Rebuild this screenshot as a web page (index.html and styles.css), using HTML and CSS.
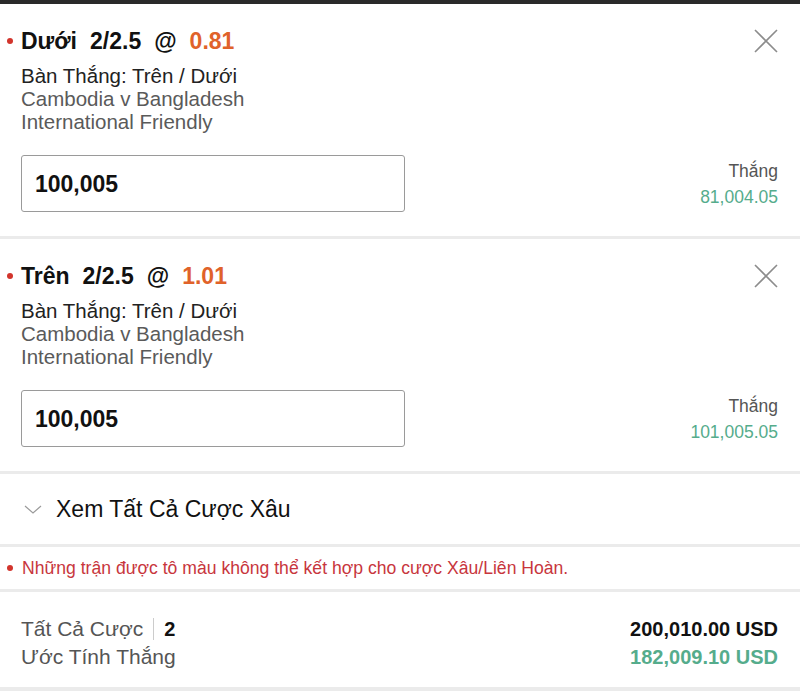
FILE: index.html
```html
<!DOCTYPE html>
<html lang="vi">
<head>
  <meta charset="UTF-8">
  <title>Phiếu Cược</title>
  <link rel="stylesheet" href="styles.css">
</head>
<body>
  <div class="slip">

    <div class="bet">
      <div class="bet-head">
        <div class="bet-title">
          <span class="pick">Dưới</span>
          <span class="line">2/2.5</span>
          <span class="at">@</span>
          <span class="odds">0.81</span>
        </div>
        <button class="close" aria-label="Xoá">
          <svg width="24" height="24" viewBox="0 0 24 24"><path d="M1 1 L23 23 M23 1 L1 23" stroke="#8c8c8c" stroke-width="1.6" fill="none"/></svg>
        </button>
      </div>
      <div class="bet-info">
        <div class="market">Bàn Thắng: Trên / Dưới</div>
        <div class="match">Cambodia v Bangladesh</div>
        <div class="match">International Friendly</div>
      </div>
      <div class="stake-row">
        <div class="stake">100,005</div>
        <div class="win">
          <div class="win-label">Thắng</div>
          <div class="win-value">81,004.05</div>
        </div>
      </div>
    </div>

    <div class="bet">
      <div class="bet-head">
        <div class="bet-title">
          <span class="pick">Trên</span>
          <span class="line">2/2.5</span>
          <span class="at">@</span>
          <span class="odds">1.01</span>
        </div>
        <button class="close" aria-label="Xoá">
          <svg width="24" height="24" viewBox="0 0 24 24"><path d="M1 1 L23 23 M23 1 L1 23" stroke="#8c8c8c" stroke-width="1.6" fill="none"/></svg>
        </button>
      </div>
      <div class="bet-info">
        <div class="market">Bàn Thắng: Trên / Dưới</div>
        <div class="match">Cambodia v Bangladesh</div>
        <div class="match">International Friendly</div>
      </div>
      <div class="stake-row">
        <div class="stake">100,005</div>
        <div class="win">
          <div class="win-label">Thắng</div>
          <div class="win-value">101,005.05</div>
        </div>
      </div>
    </div>

    <div class="combo">
      <svg class="chevron" width="18" height="9" viewBox="0 0 18 9"><path d="M1 1 L9 8 L17 1" stroke="#9a9a9a" stroke-width="1.2" fill="none"/></svg>
      <span>Xem Tất Cả Cược Xâu</span>
    </div>

    <div class="warning">Những trận được tô màu không thể kết hợp cho cược Xâu/Liên Hoàn.</div>

    <div class="summary">
      <div class="sum-labels">
        <div class="sum-line">Tất Cả Cược <span class="divider"></span> <b>2</b></div>
        <div class="sum-line">Ước Tính Thắng</div>
      </div>
      <div class="sum-values">
        <div class="total">200,010.00 USD</div>
        <div class="est">182,009.10 USD</div>
      </div>
    </div>

  </div>
</body>
</html>
```

FILE: styles.css
```css
body {
  margin: 0;
  font-family: 'Liberation Sans', Arial, sans-serif;
  background: #ebebeb;
  color: #111;
}

.slip {
  border-top: 4px solid #2a2a2a;
}

.bet {
  background: #fff;
  padding: 23px 22px 24px 21px;
  border-bottom: 3px solid #ebebeb;
}

.bet-head {
  display: flex;
  justify-content: space-between;
  align-items: center;
  height: 28px;
}

.bet-title {
  display: flex;
  align-items: center;
  gap: 13px;
  font-size: 23px;
  font-weight: bold;
  margin-left: -14px;
}

.bet-title::before {
  content: '';
  width: 6px;
  height: 6px;
  border-radius: 50%;
  background: #d2342c;
  margin-right: -5px;
}

.odds {
  color: #e0622a;
}

.close {
  background: none;
  border: none;
  padding: 0;
  width: 24px;
  height: 24px;
  cursor: pointer;
}

.bet-info {
  margin-top: 9px;
  font-size: 20.5px;
  line-height: 23px;
}

.market {
  color: #222;
}

.match {
  color: #5a5a5a;
}

.stake-row {
  display: flex;
  justify-content: space-between;
  align-items: center;
  margin-top: 22px;
}

.stake {
  width: 384px;
  height: 57px;
  box-sizing: border-box;
  border: 1px solid #9a9a9a;
  border-radius: 3px;
  padding: 2px 13px 0;
  display: flex;
  align-items: center;
  font-size: 23px;
  font-weight: bold;
}

.win {
  text-align: right;
  font-size: 17.5px;
  line-height: 26px;
}

.win-label {
  color: #555;
}

.win-value {
  color: #55ac8c;
}

.combo {
  background: #fff;
  height: 70px;
  display: flex;
  align-items: center;
  padding-left: 24px;
  gap: 14px;
  font-size: 23px;
  border-bottom: 3px solid #ebebeb;
}

.warning {
  background: #fff;
  height: 42px;
  display: flex;
  align-items: center;
  padding-left: 7px;
  gap: 9px;
  font-size: 17.6px;
  color: #c8363d;
  border-bottom: 3px solid #ebebeb;
}

.warning::before {
  content: '';
  width: 6px;
  height: 6px;
  border-radius: 50%;
  background: #d2342c;
}

.summary {
  background: #fff;
  height: 95px;
  box-sizing: border-box;
  padding: 23px 22px 0 21px;
  display: flex;
  justify-content: space-between;
}

.sum-line {
  font-size: 21px;
  line-height: 28px;
  color: #555;
  display: flex;
  align-items: center;
  gap: 6px;
}

.sum-line b {
  color: #111;
  font-size: 20px;
}

.divider {
  width: 1px;
  height: 22px;
  background: #ccc;
  margin: 0 4px;
}

.sum-values {
  text-align: right;
  font-size: 20px;
  font-weight: bold;
  line-height: 28px;
}

.est {
  color: #55ac8c;
}
```
